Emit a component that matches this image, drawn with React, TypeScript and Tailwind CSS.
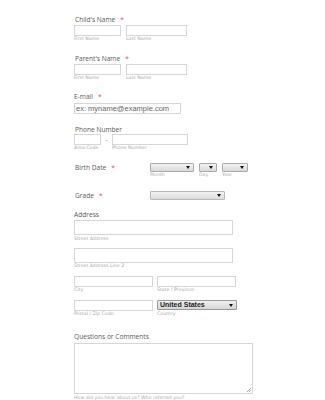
import React from "react";

const Req = () => <span className="ml-[5px] text-[#e25050]">*</span>;

const Sub = ({ children, className = "" }: { children?: React.ReactNode; className?: string }) => (
  <div className={`h-[6px] leading-[6px] text-[4.7px] text-[#aaa] whitespace-nowrap ${className}`}>{children}</div>
);

const Input = ({ w, h = 11 }: { w: number; h?: number }) => (
  <div className="border border-[#d6d6d6] bg-white" style={{ width: w, height: h }} />
);

const Arrow = () => (
  <svg width="4" height="3" viewBox="0 0 4 3" className="shrink-0">
    <path d="M0 0H4L2 3Z" fill="#111" />
  </svg>
);

const Select = ({ w, h = 9, light = false }: { w: number; h?: number; light?: boolean }) => (
  <div
    className={`flex items-center justify-end pr-[3px] border rounded-[1px] ${light ? "border-[#bbb] bg-gradient-to-b from-[#f2f2f2] to-[#dcdcdc]" : "border-[#aaa] bg-gradient-to-b from-[#f4f4f4] to-[#d9d9d9]"}`}
    style={{ width: w, height: h }}
  >
    <Arrow />
  </div>
);

const Label = ({ children, className = "" }: { children: React.ReactNode; className?: string }) => (
  <div className={`h-[9px] leading-[9px] text-[6.6px] font-normal text-[#5a5a5a] whitespace-nowrap font-['Open_Sans',sans-serif] ${className}`}>{children}</div>
);

export default function App() {
  return (
    <div className="w-[325px] h-[400px] overflow-hidden bg-white font-['DejaVu_Sans',Verdana,sans-serif]">
      <div className="pl-[74px] pt-[15px]">
        {/* Child's Name */}
        <Label className="pl-[1px]">Child's Name<Req /></Label>
        <div className="mt-[1px] flex gap-[5px]">
          <div><Input w={47} /><Sub>First Name</Sub></div>
          <div><Input w={61} /><Sub>Last Name</Sub></div>
        </div>

        {/* Parent's Name */}
        <Label className="pl-[1px] mt-[12px]">Parent's Name<Req /></Label>
        <div className="mt-[1px] flex gap-[5px]">
          <div><Input w={47} /><Sub>First Name</Sub></div>
          <div><Input w={61} /><Sub>Last Name</Sub></div>
        </div>

        {/* Email */}
        <Label className="mt-[11px]">E-mail<Req /></Label>
        <div className="mt-[2px] w-[107px] h-[11px] border border-[#d6d6d6] bg-white flex items-center pl-[1px] text-[7.5px] leading-[9px] text-[#666] font-['Liberation_Sans',Arial,sans-serif] whitespace-nowrap overflow-hidden">
          ex: myname@example.com
        </div>

        {/* Phone */}
        <Label className="pl-[1px] mt-[11px]">Phone Number</Label>
        <div className="flex">
          <div><Input w={27} /><Sub>Area Code</Sub></div>
          <div className="w-[11px] h-[11px] leading-[11px] text-center text-[6px] text-[#777]">-</div>
          <div><Input w={76} /><Sub>Phone Number</Sub></div>
        </div>

        {/* Birth Date */}
        <div className="mt-[12px] flex">
          <Label className="w-[76px] pl-[1px] leading-[10px]">Birth Date<Req /></Label>
          <div className="flex gap-[5px]">
            <div><Select w={44} /><Sub>Month</Sub></div>
            <div><Select w={18} /><Sub>Day</Sub></div>
            <div><Select w={26} /><Sub>Year</Sub></div>
          </div>
        </div>

        {/* Grade */}
        <div className="mt-[13px] flex">
          <Label className="w-[76px] pl-[1px] leading-[10px]">Grade<Req /></Label>
          <Select w={75} light />
        </div>

        {/* Address */}
        <Label className="mt-[10px]">Address</Label>
        <div className="mt-[1px]"><Input w={159} h={15} /></div>
        <Sub className="mt-[1px]">Street Address</Sub>
        <div className="mt-[6px]"><Input w={159} h={15} /></div>
        <Sub>Street Address Line 2</Sub>
        <div className="mt-[7px] flex gap-[4px]">
          <div><Input w={79} /><Sub>City</Sub></div>
          <div><Input w={79} /><Sub>State / Province</Sub></div>
        </div>
        <div className="mt-[7px] flex gap-[4px]">
          <div><Input w={79} /><Sub>Postal / Zip Code</Sub></div>
          <div>
            <div className="w-[80px] h-[10px] border border-[#999] rounded-[1px] bg-gradient-to-b from-[#f0f0f0] to-[#d6d6d6] flex items-center justify-between pl-[2px] pr-[3px]">
              <span className="text-[7px] leading-[8px] font-bold text-[#222] font-['Liberation_Sans',Arial,sans-serif]">United States</span>
              <Arrow />
            </div>
            <Sub className="mt-[1px]">Country</Sub>
          </div>
        </div>

        {/* Questions */}
        <Label className="mt-[15px]">Questions or Comments</Label>
        <div className="mt-[2px] relative w-[179px] h-[51px] border border-[#d6d6d6] bg-white">
          <svg width="5" height="5" viewBox="0 0 5 5" className="absolute right-[1px] bottom-[1px]">
            <path d="M5 1L1 5M5 3L3 5" stroke="#888" strokeWidth="0.7" />
          </svg>
        </div>
        <Sub className="mt-[1px]">How did you hear about us? Who referred you?</Sub>
      </div>
    </div>
  );
}
